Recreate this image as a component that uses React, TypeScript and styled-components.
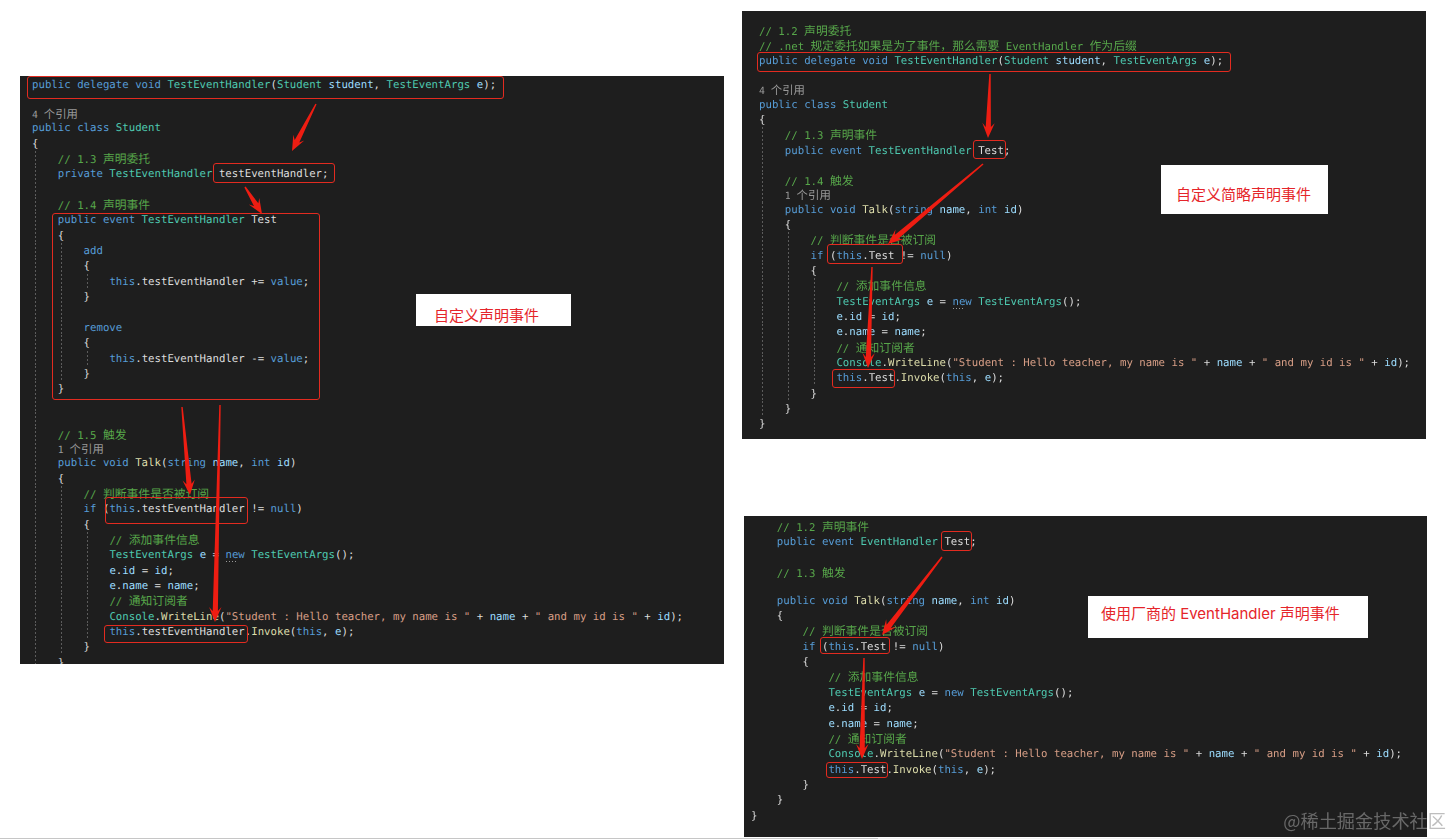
import React from "react";
import styled, { createGlobalStyle } from "styled-components";

const CHAR = 6.45;
const COLORS = {
  kw: "#569cd6",
  type: "#4ec9b0",
  fn: "#dcdcaa",
  local: "#9cdcfe",
  str: "#d69d85",
  comment: "#57a64a",
  plain: "#dcdcdc",
};
type Kind = keyof typeof COLORS;

const Global = createGlobalStyle`
  html, body { margin: 0; padding: 0; background: #fff; }
  body { width: 1452px; height: 839px; overflow: hidden; }
`;

const Page = styled.div`
  position: relative;
  width: 1452px;
  height: 839px;
  display: grid;
  grid-template-rows: 837.6px 1.4px;
  overflow: hidden;
  filter: blur(0.3px);
`;

const Columns = styled.div`
  display: flex;
  align-items: flex-start;
  padding-left: 20px;
  gap: 18px;
`;

const LeftColumn = styled.div`
  padding-top: 76px;
`;

const RightColumn = styled.div`
  display: flex;
  flex-direction: column;
  padding-top: 11px;
  gap: 77px;
`;

const Panel = styled.section<{ $w: number; $h: number; $pt: number; $pl: number; $ml?: number }>`
  position: relative;
  box-sizing: border-box;
  width: ${(p) => p.$w}px;
  height: ${(p) => p.$h}px;
  margin-left: ${(p) => p.$ml ?? 0}px;
  padding: ${(p) => p.$pt}px 0 0 ${(p) => p.$pl}px;
  background: #1e1e1e;
  overflow: hidden;
`;

const CodeLine = styled.div<{ $lens?: boolean }>`
  display: flex;
  align-items: stretch;
  height: ${(p) => (p.$lens ? 12.7 : 15.35)}px;
  line-height: ${(p) => (p.$lens ? 12.7 : 15.35)}px;
  font-family: "DejaVu Sans Mono", "Noto Sans CJK SC", monospace;
  font-size: 10.71px;
  text-rendering: geometricPrecision;
  white-space: pre;
`;

const Guide = styled.span<{ $show: boolean }>`
  flex: none;
  width: ${CHAR * 4}px;
  background: ${(p) =>
    p.$show
      ? "repeating-linear-gradient(to bottom, #5c5c5c 0 2px, transparent 2px 4px) 3px 0 / 1px 100% no-repeat"
      : "none"};
`;

const Token = styled.span<{ $k: Kind }>`
  color: ${(p) => COLORS[p.$k]};
`;

const HintToken = styled(Token)`
  position: relative;
  &::after {
    content: "";
    position: absolute;
    left: 1px;
    bottom: -1px;
    width: 10px;
    height: 1px;
    background: repeating-linear-gradient(to right, #9a9a9a 0 1px, transparent 1px 3px);
  }
`;

const Cjk = styled.span`
  font-family: "Noto Sans CJK SC", sans-serif;
  font-size: 11.8px;
`;

const Lens = styled.span`
  color: #999999;
  font-size: 9.8px;
`;

const LensCjk = styled.span`
  font-family: "Noto Sans CJK SC", sans-serif;
  font-size: 11.4px;
`;

const Mark = styled.div<{ $x: number; $y: number; $w: number; $h: number }>`
  position: absolute;
  box-sizing: border-box;
  left: ${(p) => p.$x}px;
  top: ${(p) => p.$y}px;
  width: ${(p) => p.$w}px;
  height: ${(p) => p.$h}px;
  border: 1px solid #e32b20;
  border-radius: 3px;
`;

const Note = styled.div<{ $x: number; $y: number; $w: number; $h: number; $pl: number; $pt: number }>`
  position: absolute;
  box-sizing: border-box;
  left: ${(p) => p.$x}px;
  top: ${(p) => p.$y}px;
  width: ${(p) => p.$w}px;
  height: ${(p) => p.$h}px;
  padding: ${(p) => p.$pt}px 0 0 ${(p) => p.$pl}px;
  background: #ffffff;
  color: #e5252a;
  font-family: Inter, "Noto Sans CJK SC", sans-serif;
  font-size: 15px;
  line-height: 18px;
  white-space: nowrap;
`;

const ScrollTrack = styled.div`
  display: flex;
  background: #f0f0f0;
`;

const ScrollThumb = styled.div`
  width: 878px;
  background: #c6c6c6;
`;

const Arrows = styled.svg`
  position: absolute;
  left: 0;
  top: 0;
  width: 1452px;
  height: 839px;
  pointer-events: none;
`;

const Watermark = styled.div`
  position: absolute;
  right: 6px;
  bottom: 7px;
  color: rgba(150, 150, 150, 0.62);
  font-family: "Noto Sans CJK SC", sans-serif;
  font-size: 18.2px;
  line-height: 24px;
  white-space: nowrap;
`;

const KW = new Set(["public", "private", "delegate", "void", "class", "event", "add", "remove", "this", "if", "new", "null", "string", "int", "value"]);
const TYPES = new Set(["TestEventHandler", "Student", "TestEventArgs", "EventHandler", "Console"]);
const FNS = new Set(["Talk", "WriteLine", "Invoke"]);
const LOCALS = new Set(["student", "name", "id", "e"]);

function kindOf(tok: string): Kind {
  if (tok.startsWith('"')) return "str";
  if (KW.has(tok)) return "kw";
  if (TYPES.has(tok)) return "type";
  if (FNS.has(tok)) return "fn";
  if (LOCALS.has(tok)) return "local";
  return "plain";
}

function splitCjk(text: string) {
  return text.split(/([\u4e00-\u9fff，]+)/).filter(Boolean);
}

const isCjk = (s: string) => /[\u4e00-\u9fff]/.test(s);

function Tokens({ text, hint }: { text: string; hint: boolean }) {
  const trimmed = text.trim();
  if (trimmed.startsWith("//")) {
    return (
      <Token $k="comment">
        {splitCjk(trimmed).map((part, i) => (isCjk(part) ? <Cjk key={i}>{part}</Cjk> : part))}
      </Token>
    );
  }
  if (trimmed.startsWith("@")) {
    return (
      <Lens>
        {splitCjk(trimmed.slice(1)).map((part, i) => (isCjk(part) ? <LensCjk key={i}>{part}</LensCjk> : part))}
      </Lens>
    );
  }
  const parts = trimmed.match(/"[^"]*"|\w+|\s+|[^\w\s]/g) ?? [];
  return (
    <>
      {parts.map((tok, i) =>
        hint && tok === "new" ? (
          <HintToken key={i} $k="kw">{tok}</HintToken>
        ) : (
          <Token key={i} $k={kindOf(tok)}>{tok}</Token>
        ),
      )}
    </>
  );
}

function Code({ source, guides, hint }: { source: string; guides: boolean; hint: boolean }) {
  const lines = source.replace(/^\n/, "").replace(/\n\s*$/, "").split("\n");
  return (
    <>
      {lines.map((line, i) => {
        const depth = Math.floor((line.length - line.trimStart().length) / 4);
        const lens = line.trim().startsWith("@");
        return (
          <CodeLine key={i} $lens={lens}>
            {Array.from({ length: depth }, (_, g) => (
              <Guide key={g} $show={guides} />
            ))}
            <span>
              <Tokens text={line} hint={hint} />
            </span>
          </CodeLine>
        );
      })}
    </>
  );
}

const CUSTOM = `
public delegate void TestEventHandler(Student student, TestEventArgs e);

@4 个引用
public class Student
{
    // 1.3 声明委托
    private TestEventHandler testEventHandler;
    
    // 1.4 声明事件
    public event TestEventHandler Test
    {
        add
        {
            this.testEventHandler += value;
        }
        
        remove
        {
            this.testEventHandler -= value;
        }
    }
    
    
    // 1.5 触发
    @1 个引用
    public void Talk(string name, int id)
    {
        // 判断事件是否被订阅
        if (this.testEventHandler != null)
        {
            // 添加事件信息
            TestEventArgs e = new TestEventArgs();
            e.id = id;
            e.name = name;
            // 通知订阅者
            Console.WriteLine("Student : Hello teacher, my name is " + name + " and my id is " + id);
            this.testEventHandler.Invoke(this, e);
        }
    }
`;

const SHORT = `
// 1.2 声明委托
// .net 规定委托如果是为了事件，那么需要 EventHandler 作为后缀
public delegate void TestEventHandler(Student student, TestEventArgs e);

@4 个引用
public class Student
{
    // 1.3 声明事件
    public event TestEventHandler Test;
    
    // 1.4 触发
    @1 个引用
    public void Talk(string name, int id)
    {
        // 判断事件是否被订阅
        if (this.Test != null)
        {
            // 添加事件信息
            TestEventArgs e = new TestEventArgs();
            e.id = id;
            e.name = name;
            // 通知订阅者
            Console.WriteLine("Student : Hello teacher, my name is " + name + " and my id is " + id);
            this.Test.Invoke(this, e);
        }
    }
}
`;

const VENDOR = `
    // 1.2 声明事件
    public event EventHandler Test;

    // 1.3 触发
    @
    public void Talk(string name, int id)
    {
        // 判断事件是否被订阅
        if (this.Test != null)
        {
            // 添加事件信息
            TestEventArgs e = new TestEventArgs();
            e.id = id;
            e.name = name;
            // 通知订阅者
            Console.WriteLine("Student : Hello teacher, my name is " + name + " and my id is " + id);
            this.Test.Invoke(this, e);
        }
    }
}
`;

type Rect = [number, number, number, number];

function Marks({ rects, ox, oy }: { rects: Rect[]; ox: number; oy: number }) {
  return (
    <>
      {rects.map(([x1, y1, x2, y2], i) => (
        <Mark key={i} $x={x1 - ox} $y={y1 - oy} $w={x2 - x1} $h={y2 - y1} />
      ))}
    </>
  );
}

function arrowPoints(x1: number, y1: number, x2: number, y2: number) {
  const len = Math.hypot(x2 - x1, y2 - y1);
  const ux = (x2 - x1) / len;
  const uy = (y2 - y1) / len;
  const nx = -uy;
  const ny = ux;
  const at = (back: number, side: number) =>
    `${(x2 - ux * back + nx * side).toFixed(1)},${(y2 - uy * back + ny * side).toFixed(1)}`;
  return [
    at(len, 0.7),
    at(11, 2.6),
    at(15, 6.2),
    at(0, 0),
    at(15, -6.2),
    at(11, -2.6),
    at(len, -0.7),
  ].join(" ");
}

const ARROWS: Rect[] = [
  [316, 104, 292, 151],
  [245, 187, 262, 214],
  [182, 407, 190, 495],
  [220, 405, 215, 622],
  [990, 74, 988, 138],
  [983, 164, 888, 244],
  [872, 267, 868, 368],
  [942, 557, 882, 635],
  [864, 658, 862, 759],
];

export default function App() {
  return (
    <Page>
      <Global />
      <Columns>
        <LeftColumn>
          <Panel $w={704} $h={588} $pt={1} $pl={12}>
            <Code source={CUSTOM} guides hint />
            <Marks
              ox={20}
              oy={76}
              rects={[
                [27, 76, 504, 99],
                [213, 163, 335, 183],
                [52, 213, 320, 400],
                [105, 497, 248, 524],
                [104, 625, 248, 643],
              ]}
            />
            <Note $x={396} $y={218} $w={155} $h={32} $pl={18} $pt={13}>自定义声明事件</Note>
          </Panel>
        </LeftColumn>
        <RightColumn>
          <Panel $w={684} $h={428} $pt={11.7} $pl={17}>
            <Code source={SHORT} guides hint />
            <Marks
              ox={742}
              oy={11}
              rects={[
                [757, 52, 1231, 72],
                [973, 140, 1006, 159],
                [827, 244, 903, 264],
                [832, 369, 895, 388],
              ]}
            />
            <Note $x={419} $y={154} $w={167} $h={49} $pl={15} $pt={21}>自定义简略声明事件</Note>
          </Panel>
          <Panel $w={683} $h={321} $ml={2} $pt={2.7} $pl={7}>
            <Code source={VENDOR} guides={false} hint={false} />
            <Marks
              ox={744}
              oy={516}
              rects={[
                [941, 531, 972, 551],
                [820, 637, 890, 654],
                [826, 762, 888, 778],
              ]}
            />
            <Note $x={344} $y={80} $w={280} $h={42} $pl={13} $pt={9}>使用厂商的 EventHandler 声明事件</Note>
          </Panel>
        </RightColumn>
      </Columns>
      <ScrollTrack>
        <ScrollThumb />
      </ScrollTrack>
      <Arrows viewBox="0 0 1452 839">
        {ARROWS.map(([a, b, c, d], i) => (
          <polygon key={i} points={arrowPoints(a, b, c, d)} fill="#ee1d12" />
        ))}
      </Arrows>
      <Watermark>@稀土掘金技术社区</Watermark>
    </Page>
  );
}
